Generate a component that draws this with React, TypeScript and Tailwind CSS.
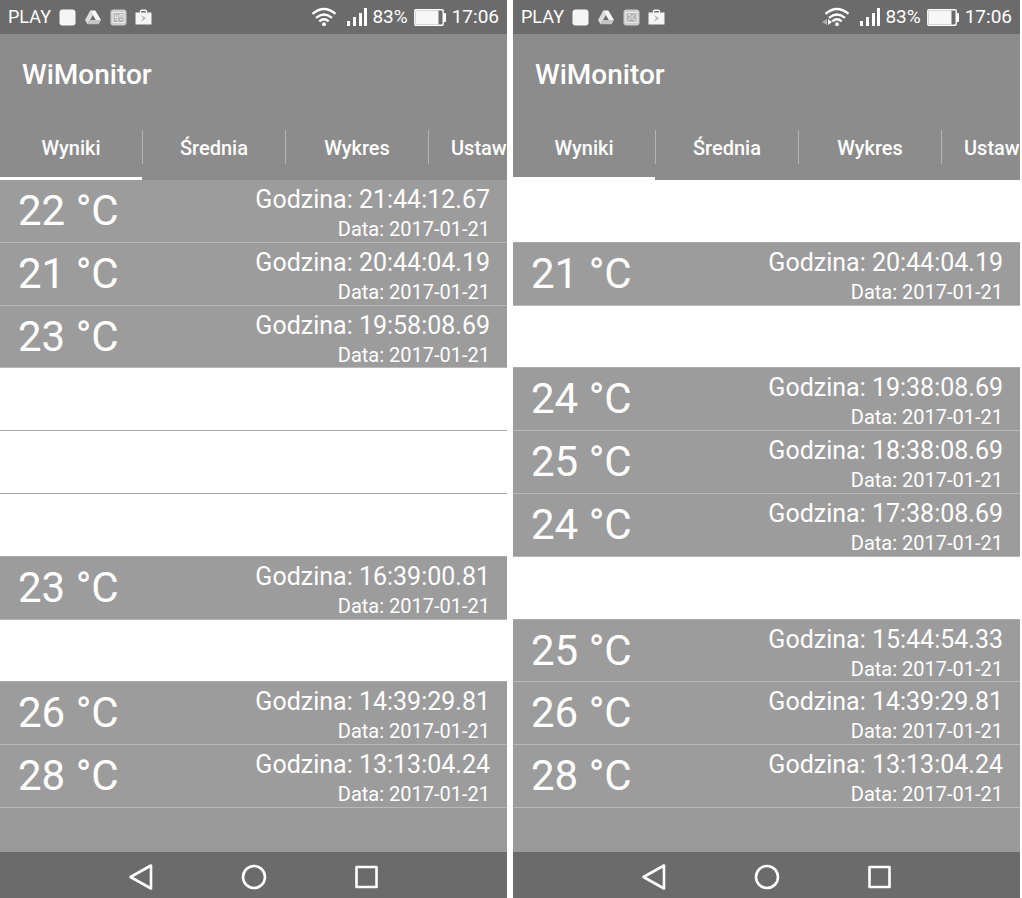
type Reading = { temp: number; time: string; date: string } | null;

const DATE = '2017-01-21';

const leftReadings: Reading[] = [
  { temp: 22, time: '21:44:12.67', date: DATE },
  { temp: 21, time: '20:44:04.19', date: DATE },
  { temp: 23, time: '19:58:08.69', date: DATE },
  null,
  null,
  null,
  { temp: 23, time: '16:39:00.81', date: DATE },
  null,
  { temp: 26, time: '14:39:29.81', date: DATE },
  { temp: 28, time: '13:13:04.24', date: DATE },
];

const rightReadings: Reading[] = [
  null,
  { temp: 21, time: '20:44:04.19', date: DATE },
  null,
  { temp: 24, time: '19:38:08.69', date: DATE },
  { temp: 25, time: '18:38:08.69', date: DATE },
  { temp: 24, time: '17:38:08.69', date: DATE },
  null,
  { temp: 25, time: '15:44:54.33', date: DATE },
  { temp: 26, time: '14:39:29.81', date: DATE },
  { temp: 28, time: '13:13:04.24', date: DATE },
];

const tabs = ['Wyniki', 'Średnia', 'Wykres', 'Ustaw'];

function NotificationIcons({ photo }: { photo: boolean }) {
  return (
    <div className="flex items-center gap-2 ml-2">
      <svg width="17" height="17" viewBox="0 0 17 17">
        <rect x="0.5" y="0.5" width="16" height="16" rx="3" fill="#f5f5f5" />
        <path d="M5 6h3M10 6h2M5 10h7" stroke="#f1f1f1" />
      </svg>

      {/* Drive */}
      <svg width="18" height="17" viewBox="0 0 18 17">
        <path d="M6.3 1.5L1 11l2.6 4.2L9 6z" fill="#dcdcdc" />
        <path d="M6.3 1.5h5L17 11h-5.2z" fill="#fafafa" />
        <path d="M6 11h11l-2.4 4.2h-11z" fill="#c4c4c4" />
      </svg>

      {/* Gallery */}
      <svg width="17" height="17" viewBox="0 0 17 17">
        <rect x="0.5" y="0.5" width="16" height="16" rx="3" fill="#cdcdcd" />
        <rect x="3" y="3.5" width="11" height="10" fill="#b4b4b4" stroke="#eeeeee" />
        {photo ? (
          <path d="M4.5 12l7-6.5M5 5.5h2v2M9 9l3.5 3" stroke="#eeeeee" fill="none" />
        ) : (
          <path d="M5.5 5.5v3h2.5v-3M10 8.5v-3h2v3M5.5 10.5h2.5v2M10 10.5h2" stroke="#eeeeee" fill="none" />
        )}
      </svg>

      {/* Play store */}
      <svg width="17" height="17" viewBox="0 0 17 17">
        <path d="M5.5 4V2.5Q5.5 1.2 6.8 1.2h3.4q1.3 0 1.3 1.3V4" stroke="#f5f5f5" strokeWidth="1.4" fill="none" />
        <path d="M0.5 3.5h16v12h-16z" fill="#f5f5f5" />
        <path d="M6 6l5 3-5 4 2-4z" fill="#b5b5b5" />
      </svg>
    </div>
  );
}

function StatusBar({ transfer }: { transfer: boolean }) {
  return (
    <div className="flex items-center h-[34px] pl-2 pr-2 bg-[#6b6b6b] text-[18px] leading-6">
      <span>PLAY</span>
      <NotificationIcons photo={transfer} />

      <div className="flex items-center ml-auto">
        <svg width="28" height="20" viewBox="0 0 28 20" className="mr-2.5" fill="none" stroke="#ffffff" strokeWidth="2.4">
          <path d="M4.5 6.8Q16 -3 27.5 6.8" />
          <path d="M8 10.8Q16 4 24 10.8" />
          <path d="M11.3 14.4Q16 10.2 20.7 14.4" />
          <circle cx="16" cy="17.2" r="1.9" fill="#ffffff" stroke="none" />
          {transfer && (
            <g stroke="none">
              <path d="M6 12v6l-5-3z" fill="#b0b0b0" />
              <path d="M7 12v6l4-3z" fill="#ffffff" />
            </g>
          )}
        </svg>
        <svg width="22" height="18" viewBox="0 0 22 18" className="mr-1" fill="#ffffff">
          <rect x="1" y="13" width="3" height="5" />
          <rect x="7" y="9" width="3" height="9" />
          <rect x="13" y="5" width="3" height="13" />
          <rect x="18" y="0" width="3" height="18" />
        </svg>
        <span className="text-[19px]">83%</span>
        <svg width="32" height="17" viewBox="0 0 32 17" className="ml-1.5 mr-1.5">
          <rect x="0.8" y="0.8" width="28.4" height="15.4" rx="1" fill="none" stroke="#ffffff" strokeWidth="1.4" />
          <rect x="1.5" y="1.5" width="23" height="14" fill="#f7f7f7" />
          <rect x="29.5" y="4" width="2.5" height="9" rx="1" fill="#ffffff" />
        </svg>
        <span className="text-[19px]">17:06</span>
      </div>
    </div>
  );
}

function Header() {
  return (
    <header className="bg-[#8c8c8c]">
      <h1 className="px-[22px] pt-[25px] text-[28px] leading-8 font-medium">WiMonitor</h1>
      <nav className="flex overflow-hidden mt-[23px] h-[66px]">
        {tabs.map((tab, i) => (
          <button
            key={tab}
            type="button"
            className={
              i === 0
                ? 'flex flex-col shrink-0 w-[142px] pt-4 border-b-3 border-white'
                : 'flex flex-col shrink-0 w-[143px] pt-4'
            }
          >
            <span
              className={
                i === 0
                  ? 'w-full h-[34px] text-[20px] leading-9 font-medium'
                  : i === 3
                    ? 'w-full h-[34px] pl-[22px] border-l border-[#b5b5b5] text-left text-[20px] leading-9 font-medium'
                    : 'w-full h-[34px] border-l border-[#b5b5b5] text-[20px] leading-9 font-medium'
              }
            >
              {tab}
            </span>
          </button>
        ))}
      </nav>
    </header>
  );
}

function Row({ reading }: { reading: Reading }) {
  if (!reading) {
    return <li className="bg-white border-b border-[#ababab]"></li>;
  }
  return (
    <li className="flex justify-between pl-[18px] pr-[17px] bg-[#9c9c9c] border-b border-[#b8b8b8]">
      <span className="text-[42px] leading-[61px]">{reading.temp} °C</span>
      <div className="text-right pt-0.5">
        <p className="text-[25px] leading-[35px]">Godzina: {reading.time}</p>
        <p className="text-[20px] leading-6">Data: {reading.date}</p>
      </div>
    </li>
  );
}

function NavBar() {
  return (
    <div className="flex items-center justify-center gap-[85px] h-[46px] pt-1 bg-[#6b6b6b]">
      <button type="button" aria-label="Back">
        <svg width="28" height="28" viewBox="0 0 28 28" fill="none" stroke="#ffffff" strokeWidth="2.6" strokeLinejoin="round">
          <path d="M24 2.5v23L3.5 14z" />
        </svg>
      </button>
      <button type="button" aria-label="Home">
        <svg width="28" height="28" viewBox="0 0 28 28" fill="none" stroke="#ffffff" strokeWidth="2.6">
          <circle cx="14" cy="14" r="11" />
        </svg>
      </button>
      <button type="button" aria-label="Recent apps">
        <svg width="28" height="28" viewBox="0 0 28 28" fill="none" stroke="#ffffff" strokeWidth="2.6" strokeLinejoin="round">
          <rect x="3.5" y="4" width="20" height="20" />
        </svg>
      </button>
    </div>
  );
}

function Phone({ readings, transfer }: { readings: Reading[]; transfer: boolean }) {
  return (
    <section className="flex flex-col flex-1 min-w-0 bg-[#9a9a9a]">
      <StatusBar transfer={transfer} />
      <Header />
      <ul className="grid auto-rows-fr min-h-[628px]">
        {readings.map((reading, i) => (
          <Row key={i} reading={reading} />
        ))}
      </ul>
      <div className="flex-1"></div>
      <NavBar />
    </section>
  );
}

export default function App() {
  return (
    <main className="flex gap-1.5 min-h-screen pr-0.5 bg-white text-white font-['Roboto',sans-serif]">
      <Phone readings={leftReadings} transfer={false} />
      <Phone readings={rightReadings} transfer={true} />
    </main>
  );
}
